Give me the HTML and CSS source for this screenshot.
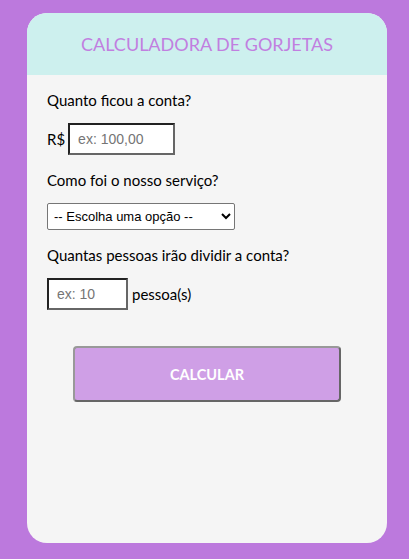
FILE: index.html
```html
<!DOCTYPE html>
<html lang="pt-BR">
<head>
<meta charset="utf-8">
<title>Calculadora de Gorjetas</title>
<link rel="stylesheet" href="styles.css">
</head>
<body>
<div class="card">
  <header class="card-header">
    <h1 class="title">CALCULADORA DE GORJETAS</h1>
  </header>
  <div class="card-body">
    <p class="question">Quanto ficou a conta?</p>
    <div class="row">
      <span class="unit">R$</span>
      <input class="field field-bill" type="text" placeholder="ex: 100,00">
    </div>
    <p class="question">Como foi o nosso serviço?</p>
    <div class="row">
      <select class="select">
        <option>-- Escolha uma opção --</option>
      </select>
    </div>
    <p class="question">Quantas pessoas irão dividir a conta?</p>
    <div class="row">
      <input class="field field-people" type="text" placeholder="ex: 10">
      <span class="unit">pessoa(s)</span>
    </div>
    <div class="actions">
      <button class="btn" type="button">CALCULAR</button>
    </div>
  </div>
</div>
</body>
</html>
```
FILE: styles.css
```css
html, body {
  margin: 0;
  padding: 0;
}
body {
  background: #bc79dd;
  font-family: Lato, "Liberation Sans", sans-serif;
  height: 559px;
  padding-top: 13px;
  box-sizing: border-box;
}
.card {
  margin-left: 27px;
  width: 360px;
  height: 530px;
  background: #f5f5f5;
  border-radius: 20px;
  overflow: hidden;
}
.card-header {
  background: #cdf0ee;
  height: 62px;
  display: flex;
  align-items: center;
  justify-content: center;
}
.title {
  margin: 0;
  font-size: 18px;
  font-weight: 400;
  color: #c17fe0;
}
.card-body {
  padding: 15px 20px 0;
}
.question {
  margin: 0 0 13px;
  font-size: 15px;
  line-height: 20px;
  color: #000;
}
.row {
  display: flex;
  align-items: center;
  gap: 3px;
  margin-bottom: 15px;
  font-size: 15px;
  color: #000;
}
.field {
  box-sizing: border-box;
  height: 32px;
  border: 2px solid #666;
  border-top-color: #222;
  border-left-color: #222;
  background: #fff;
  font-family: "Liberation Sans", Arial, sans-serif;
  font-size: 14px;
  padding: 0 8px;
  margin: 0;
}
.field::placeholder {
  color: #757575;
}
.field-bill {
  width: 107px;
}
.field-people {
  width: 81px;
  margin-right: 1px;
}
.select {
  box-sizing: border-box;
  width: 188px;
  height: 27px;
  border: 1px solid #767676;
  border-radius: 2px;
  background: #fff;
  font-family: "Liberation Sans", Arial, sans-serif;
  font-size: 13px;
  color: #000;
  padding: 0 2px;
  margin: 0;
}
.actions {
  display: flex;
  justify-content: center;
  padding-top: 21px;
}
.btn {
  width: 268px;
  height: 56px;
  box-sizing: border-box;
  background: #cf9fe6;
  border: 2px solid #666;
  border-top-color: #999;
  border-left-color: #999;
  border-radius: 4px;
  color: #ffffff;
  font-family: Lato, "Liberation Sans", sans-serif;
  font-weight: 700;
  font-size: 14.5px;
}
```
